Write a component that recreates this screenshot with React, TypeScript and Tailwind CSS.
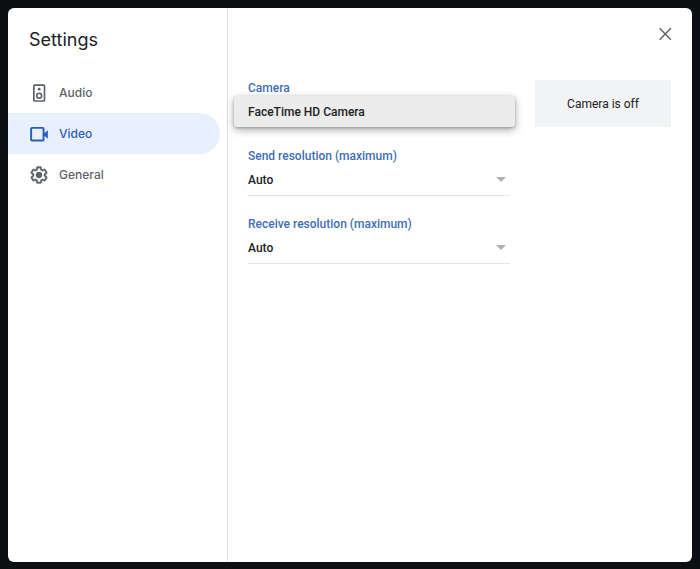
import React from "react";

const navItems = [
  { id: "audio", label: "Audio" },
  { id: "video", label: "Video" },
  { id: "general", label: "General" },
];

function NavIcon({ id }: { id: string }) {
  if (id === "audio") {
    return (
      <svg viewBox="0 0 24 24" className="w-5 h-5" fill="none" stroke="currentColor" strokeWidth="2" aria-hidden="true">
        <rect x="5.8" y="2.600" width="12.800" height="19" rx="1" />
        <circle cx="12.200" cy="15.200" r="2.900" />
        <circle cx="12.200" cy="7.400" r="1.700" fill="currentColor" stroke="none" />
      </svg>
    );
  }
  if (id === "video") {
    return (
      <svg viewBox="0 0 24 24" className="w-5 h-5" fill="currentColor" aria-hidden="true">
        <path
          fillRule="evenodd"
          d="M3.400 3.600H16.600a2 2 0 0 1 2 2V10.800L22.600 7.400V17.600L18.600 14.200V18.900a2 2 0 0 1-2 2H3.400a2 2 0 0 1-2-2V5.600a2 2 0 0 1 2-2zM3.700 5.800V18.700H16.300V5.800z"
        />
      </svg>
    );
  }
  return (
    <svg viewBox="0 0 24 24" className="w-5 h-5" fill="currentColor" aria-hidden="true">
      <path
        stroke="currentColor"
        strokeWidth="0.4"
        d="M13.850 22.250h-3.700c-.740 0-1.360-.540-1.450-1.270l-.270-1.890c-.270-.140-.530-.290-.790-.460l-1.800.720c-.700.260-1.470-.030-1.810-.650L2.200 15.530c-.350-.660-.200-1.440.360-1.880l1.530-1.190c-.010-.150-.020-.300-.020-.460 0-.150.010-.310.020-.460l-1.520-1.190c-.590-.450-.740-1.260-.370-1.880l1.850-3.190c.340-.620 1.110-.900 1.790-.630l1.810.730c.260-.170.520-.320.780-.460l.270-1.910c.090-.700.710-1.250 1.440-1.250h3.700c.740 0 1.360.540 1.450 1.270l.270 1.890c.270.140.530.290.790.460l1.800-.720c.710-.260 1.480.030 1.820.650l1.840 3.180c.360.660.200 1.440-.360 1.880l-1.520 1.190c.010.150.020.300.020.460s-.010.310-.020.460l1.520 1.190c.560.450.720 1.230.370 1.860l-1.860 3.220c-.340.620-1.110.900-1.800.630l-1.800-.720c-.260.170-.520.320-.780.460l-.270 1.910c-.100.680-.720 1.220-1.460 1.220zm-3.230-2h2.760l.370-2.550.530-.220c.440-.180.880-.440 1.340-.780l.450-.340 2.380.960 1.380-2.400-2.030-1.580.070-.560c.030-.260.060-.510.060-.780s-.030-.530-.060-.780l-.070-.560 2.030-1.580-1.390-2.400-2.390.960-.450-.350c-.420-.320-.870-.580-1.330-.770l-.520-.220-.370-2.550h-2.760l-.370 2.550-.530.210c-.440.190-.880.440-1.340.790l-.450.330-2.380-.950-1.390 2.390 2.030 1.580-.070.560a7 7 0 0 0-.060.790c0 .260.020.530.060.780l.070.560-2.030 1.580 1.380 2.400 2.390-.960.450.350c.430.330.860.580 1.330.770l.530.220z"
      />
      <circle cx="12" cy="12" r="3.8" />
    </svg>
  );
}

function SelectField({ id, label }: { id: string; label: string }) {
  return (
    <div className="flex flex-col">
      <label htmlFor={id} className="text-xs font-medium text-[#3f6fb5]">
        {label}
      </label>
      <div className="grid items-center border-b border-[#e4e4e4]">
        <select
          id={id}
          className="col-start-1 row-start-1 h-[31px] w-full appearance-none bg-transparent text-xs font-medium text-[#202124] outline-none"
        >
          <option>Auto</option>
        </select>
        <svg
          viewBox="0 0 10 5"
          className="pointer-events-none col-start-1 row-start-1 mr-1 h-[5px] w-[10px] justify-self-end text-[#b0b0b0]"
          fill="currentColor"
          aria-hidden="true"
        >
          <path d="M0 0h10L5 5z" />
        </svg>
      </div>
    </div>
  );
}

function CameraField() {
  return (
    <div className="relative flex flex-col">
      <span id="camera-label" className="text-xs font-medium text-[#3f6fb5]">
        Camera
      </span>
      <button
        type="button"
        aria-haspopup="listbox"
        aria-expanded="true"
        aria-labelledby="camera-label"
        className="h-8 w-full"
      />
      {/* Open menu covers the closed field */}
      <ul
        role="listbox"
        aria-labelledby="camera-label"
        className="absolute -left-3.5 -right-[5px] top-4 rounded-[3px] bg-[#ececec] shadow-[0_3px_9px_rgba(0,0,0,0.3),0_1px_3px_rgba(0,0,0,0.25)]"
      >
        <li role="option" aria-selected="true" className="flex h-[31px] items-center px-3.5 text-xs font-medium text-[#202124]">
          FaceTime HD Camera
        </li>
      </ul>
    </div>
  );
}

export default function App() {
  return (
    <div className="flex min-h-screen bg-[#0e0f12] px-2 pt-2 pb-[7px] font-['Roboto',sans-serif]">
      <div role="dialog" aria-labelledby="settings-title" className="flex flex-1 rounded-md bg-white">
        {/* Sidebar */}
        <aside className="w-[220px] shrink-0 border-r border-[#dfe0e2] pt-5 font-['Inter',sans-serif]">
          <h1 id="settings-title" className="pl-[21px] text-lg leading-6 text-[#202124]">
            Settings
          </h1>
          <nav className="mt-5 flex flex-col pr-[7px]">
            {navItems.map((item) => (
              <button
                key={item.id}
                type="button"
                aria-current={item.id === "video" ? "page" : undefined}
                className={
                  item.id === "video"
                    ? "flex h-[41px] items-center gap-[10px] rounded-r-full bg-[#e8f0fe] pl-[21px] text-xs font-medium text-[#2a5db8]"
                    : "flex h-[41px] items-center gap-[10px] rounded-r-full pl-[21px] text-xs font-medium text-[#5f6368]"
                }
              >
                <NavIcon id={item.id} />
                {item.label}
              </button>
            ))}
          </nav>
        </aside>

        {/* Video panel */}
        <main className="flex flex-1 flex-col pl-5 pr-[21px] pt-4">
          <button type="button" aria-label="Close" className="-mr-1 self-end text-[#5f6368]">
            <svg viewBox="0 0 24 24" className="w-5 h-5" fill="none" stroke="currentColor" strokeWidth="1.8" aria-hidden="true">
              <path d="M5.500 5.200l13.600 13.600M19.100 5.200L5.500 18.800" />
            </svg>
          </button>
          <div className="mt-9 grid grid-cols-[1fr_136px] items-start gap-[25px]">
            <div className="flex flex-col gap-5">
              <CameraField />
              <SelectField id="send" label="Send resolution (maximum)" />
              <SelectField id="receive" label="Receive resolution (maximum)" />
            </div>
            <div className="flex h-[47px] items-center justify-center bg-[#f1f3f4] text-xs text-[#202124]">Camera is off</div>
          </div>
        </main>
      </div>
    </div>
  );
}
